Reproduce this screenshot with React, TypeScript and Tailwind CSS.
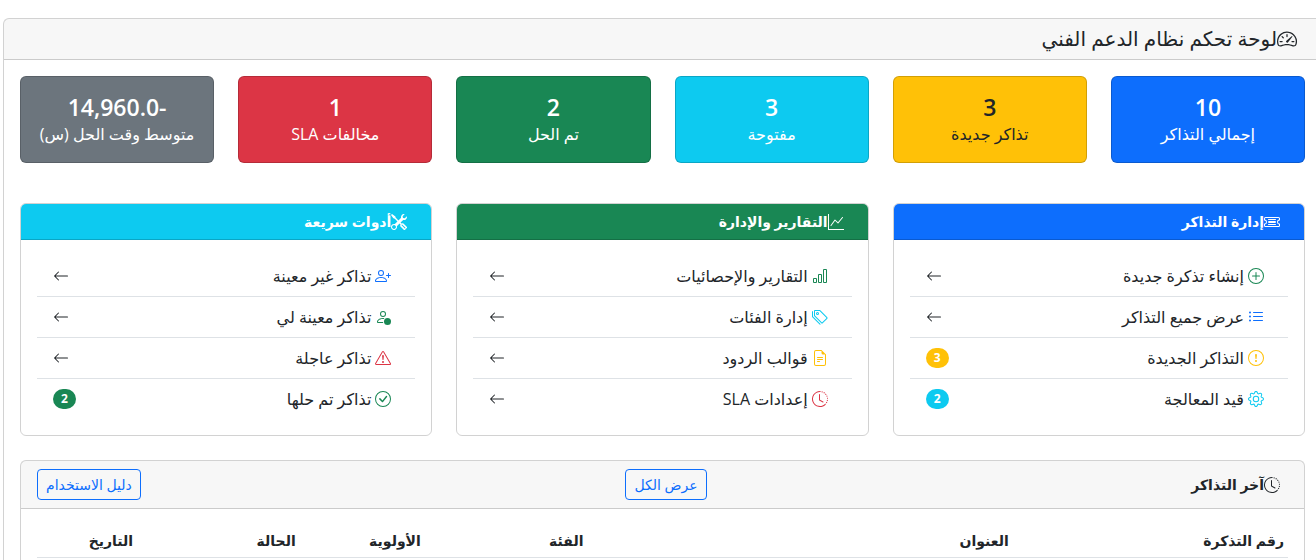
import type { IconType } from "react-icons";
import {
  BsArrowLeft,
  BsBarChart,
  BsCheckCircle,
  BsClockHistory,
  BsExclamationCircle,
  BsExclamationTriangle,
  BsFileEarmarkText,
  BsGear,
  BsGraphUp,
  BsListUl,
  BsPersonPlus,
  BsPlusCircle,
  BsSpeedometer2,
  BsTags,
  BsTicketDetailed,
  BsTools,
} from "react-icons/bs";
import clsx from "clsx";

type MenuItem = {
  label: string;
  icon: IconType;
  iconColor: string;
  badge?: { count: number; color: string };
};

type Panel = {
  title: string;
  icon: IconType;
  color: string;
  items: MenuItem[];
};

const PersonDot: IconType = ({ className }) => (
  <svg className={className} width="1em" height="1em" viewBox="0 0 16 16" fill="currentColor">
    <circle cx="12.5" cy="12.5" r="3.5" />
    <path d="M11 5a3 3 0 1 1-6 0 3 3 0 0 1 6 0M8 7a2 2 0 1 0 0-4 2 2 0 0 0 0 4" />
    <path d="M8.256 14a4.5 4.5 0 0 1-.229-1.004H3c.001-.246.154-.986.832-1.664C4.484 10.68 5.711 10 8 10q.39 0 .74.025c.226-.341.496-.65.804-.918Q8.844 9.002 8 9c-5 0-6 3-6 4s1 1 1 1z" />
  </svg>
);

const stats = [
  { value: "10", label: "إجمالي التذاكر", color: "bg-[#0d6efd] text-white" },
  { value: "3", label: "تذاكر جديدة", color: "bg-[#ffc107] text-[#212529]" },
  { value: "3", label: "مفتوحة", color: "bg-[#0dcaf0] text-white" },
  { value: "2", label: "تم الحل", color: "bg-[#198754] text-white" },
  { value: "1", label: "مخالفات SLA", color: "bg-[#dc3545] text-white" },
  { value: "-14,960.0", label: "متوسط وقت الحل (س)", color: "bg-[#6c757d] text-white" },
];

const panels: Panel[] = [
  {
    title: "إدارة التذاكر",
    icon: BsTicketDetailed,
    color: "bg-[#0d6efd]",
    items: [
      { label: "إنشاء تذكرة جديدة", icon: BsPlusCircle, iconColor: "text-[#198754]" },
      { label: "عرض جميع التذاكر", icon: BsListUl, iconColor: "text-[#0d6efd]" },
      {
        label: "التذاكر الجديدة",
        icon: BsExclamationCircle,
        iconColor: "text-[#ffc107]",
        badge: { count: 3, color: "bg-[#ffc107]" },
      },
      {
        label: "قيد المعالجة",
        icon: BsGear,
        iconColor: "text-[#0dcaf0]",
        badge: { count: 2, color: "bg-[#0dcaf0]" },
      },
    ],
  },
  {
    title: "التقارير والإدارة",
    icon: BsGraphUp,
    color: "bg-[#198754]",
    items: [
      { label: "التقارير والإحصائيات", icon: BsBarChart, iconColor: "text-[#198754]" },
      { label: "إدارة الفئات", icon: BsTags, iconColor: "text-[#0dcaf0]" },
      { label: "قوالب الردود", icon: BsFileEarmarkText, iconColor: "text-[#ffc107]" },
      { label: "إعدادات SLA", icon: BsClockHistory, iconColor: "text-[#dc3545]" },
    ],
  },
  {
    title: "أدوات سريعة",
    icon: BsTools,
    color: "bg-[#0dcaf0]",
    items: [
      { label: "تذاكر غير معينة", icon: BsPersonPlus, iconColor: "text-[#0d6efd]" },
      { label: "تذاكر معينة لي", icon: PersonDot, iconColor: "text-[#198754]" },
      { label: "تذاكر عاجلة", icon: BsExclamationTriangle, iconColor: "text-[#dc3545]" },
      {
        label: "تذاكر تم حلها",
        icon: BsCheckCircle,
        iconColor: "text-[#198754]",
        badge: { count: 2, color: "bg-[#198754]" },
      },
    ],
  },
];

const columns = [
  { label: "رقم التذكرة", width: "w-[22%]" },
  { label: "العنوان", width: "w-[34%]" },
  { label: "الفئة", width: "w-[13%]" },
  { label: "الأولوية", width: "w-[10%]" },
  { label: "الحالة", width: "w-[13%]" },
  { label: "التاريخ", width: "w-[8%]" },
];

const StatCard = ({ value, label, color }: (typeof stats)[number]) => (
  <div className={clsx("rounded-md border border-black/[0.175] py-4 text-center", color)}>
    <h4 className="text-[23px] leading-[29px] font-semibold">{value}</h4>
    <p className="whitespace-nowrap">{label}</p>
  </div>
);

const MenuPanel = ({ title, icon: Icon, color, items }: Panel) => (
  <section className="overflow-hidden rounded-md border border-black/[0.175]">
    <h6
      className={clsx(
        "flex items-center border-b border-black/[0.175] px-4 py-2 text-sm leading-[19px] font-semibold text-white",
        color
      )}
    >
      <Icon className="mr-2 text-base" />
      {title}
    </h6>
    <ul className="divide-y divide-[#dee2e6] p-4">
      {items.map((item) => (
        <li key={item.label}>
          <a href="#" className="flex items-center justify-between px-4 py-2">
            <span className="flex items-center gap-1">
              <item.icon className={clsx("mr-2", item.iconColor)} />
              {item.label}
            </span>
            {item.badge ? (
              <span
                className={clsx(
                  "rounded-full px-2 py-1 text-xs leading-3 font-bold text-white",
                  item.badge.color
                )}
              >
                {item.badge.count}
              </span>
            ) : (
              <BsArrowLeft />
            )}
          </a>
        </li>
      ))}
    </ul>
  </section>
);

const OutlineButton = ({ children }: { children: string }) => (
  <a
    href="#"
    className="rounded border border-[#0d6efd] px-2 py-1 text-sm leading-[21px] text-[#0d6efd]"
  >
    {children}
  </a>
);

export default function App() {
  return (
    <div
      dir="rtl"
      className="h-screen overflow-hidden bg-white pt-[18px] pl-[3px] font-['Open_Sans','Noto_Sans','DejaVu_Sans',sans-serif] text-base text-[#212529]"
    >
      <main className="-mr-1.5 rounded-md border border-black/[0.175]">
        <header className="border-b border-black/[0.175] bg-black/[0.03] px-4 py-2">
          <h5 className="flex items-center text-xl leading-6 font-medium">
            <BsSpeedometer2 className="mr-2" />
            لوحة تحكم نظام الدعم الفني
          </h5>
        </header>

        <div className="p-4">
          <div className="mb-10 grid grid-cols-6 gap-6">
            {stats.map((stat) => (
              <StatCard key={stat.label} {...stat} />
            ))}
          </div>

          <div className="mb-6 grid grid-cols-3 gap-6">
            {panels.map((panel) => (
              <MenuPanel key={panel.title} {...panel} />
            ))}
          </div>

          {/* Latest tickets */}
          <section className="rounded-md border border-black/[0.175]">
            <div className="flex items-center justify-between border-b border-black/[0.175] bg-black/[0.03] px-4 py-2">
              <h6 className="flex items-center text-sm font-semibold">
                <BsClockHistory className="mr-2 text-base" />
                آخر التذاكر
              </h6>
              <OutlineButton>عرض الكل</OutlineButton>
              <OutlineButton>دليل الاستخدام</OutlineButton>
            </div>
            <div className="p-4">
              <table className="w-full table-fixed">
                <thead>
                  <tr className="border-b border-[#dee2e6]">
                    {columns.map((column) => (
                      <th
                        key={column.label}
                        scope="col"
                        className={clsx("p-1 text-right text-sm leading-6 font-bold", column.width)}
                      >
                        {column.label}
                      </th>
                    ))}
                  </tr>
                </thead>
              </table>
            </div>
          </section>
        </div>
      </main>
    </div>
  );
}
